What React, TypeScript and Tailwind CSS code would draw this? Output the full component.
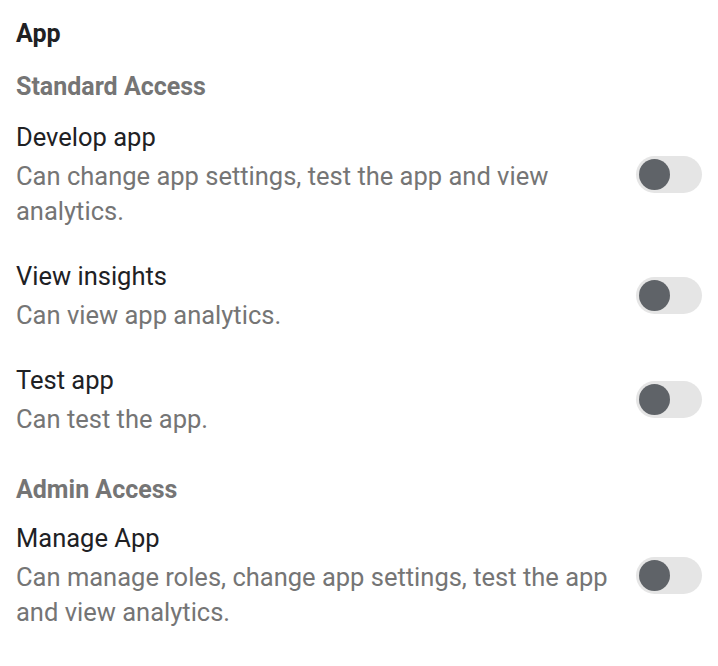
import {useState} from "react"

interface Permission {
  title: string
  description: string
}

const standard: Permission[] = [
  {
    title: "Develop app",
    description: "Can change app settings, test the app and view analytics.",
  },
  {title: "View insights", description: "Can view app analytics."},
  {title: "Test app", description: "Can test the app."},
]

const admin: Permission[] = [
  {
    title: "Manage App",
    description:
      "Can manage roles, change app settings, test the app and view analytics.",
  },
]

export default function App() {
  return (
    <div
      className="min-h-screen bg-white px-4 pt-[18px]"
      style={{fontFamily: "Roboto, 'Liberation Sans', sans-serif"}}
    >
      <h2 className="text-[25px] leading-[32px] font-bold text-[#202124]">App</h2>

      <h3 className="mt-[21px] text-[25px] leading-[32px] font-bold text-[#757575]">
        Standard Access
      </h3>
      <div className="mt-[16px] flex flex-col gap-[29px]">
        {standard.map((p) => (
          <PermissionRow key={p.title} permission={p} />
        ))}
      </div>

      <h3 className="mt-[37px] text-[25px] leading-[32px] font-bold text-[#757575]">
        Admin Access
      </h3>
      <div className="mt-[14px] flex flex-col gap-[29px]">
        {admin.map((p) => (
          <PermissionRow key={p.title} permission={p} />
        ))}
      </div>
    </div>
  )
}

function PermissionRow(props: {permission: Permission}) {
  const [on, setOn] = useState(false)

  return (
    <div className="flex items-center justify-between">
      <div className="flex-1 pr-[16px]">
        <div className="text-[25.5px] leading-[36px] text-[#202124]">
          {props.permission.title}
        </div>
        <div className="mt-[4px] text-[25.5px] leading-[35px] text-[#757575]">
          {props.permission.description}
        </div>
      </div>
      <button
        onClick={() => setOn(!on)}
        className={`relative h-[37px] w-[66px] shrink-0 rounded-full ${
          on ? "bg-[#c6dafc]" : "bg-[#e5e5e5]"
        }`}
      >
        <span
          className={`absolute top-[3px] h-[31px] w-[31px] rounded-full ${
            on ? "left-[32px] bg-[#1a73e8]" : "left-[3px] bg-[#5f6368]"
          }`}
        />
      </button>
    </div>
  )
}
